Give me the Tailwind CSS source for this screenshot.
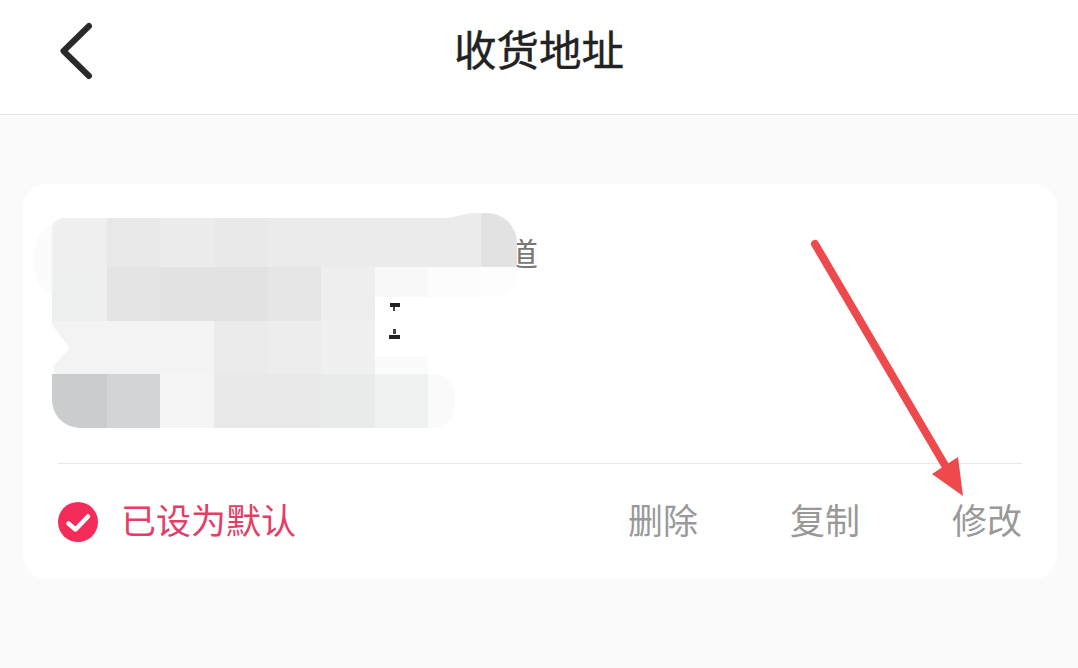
<!DOCTYPE html>
<html lang="zh-CN">

<head>
    <meta charset="UTF-8">
    <meta name="viewport" content="width=device-width, initial-scale=1.0">
    <title>收货地址</title>
    <script src="https://cdn.jsdelivr.net/npm/@tailwindcss/browser@4"></script>
</head>

<body class="bg-[#fafafa] font-['Noto_Sans_CJK_SC','Noto_Sans',sans-serif]">
    <div class="relative w-[1078px] h-[668px] overflow-hidden">
        <!-- header -->
        <div class="grid grid-cols-[1fr_auto_1fr] items-center h-[115px] pb-[18px] bg-white border-b border-[#e6e6e6]">
            <svg class="ml-[55px] mt-[6px]" width="44" height="64" viewBox="0 0 44 64" fill="none">
                <path d="M34 7 L8.500 32 L34 57" stroke="#2a2a2a" stroke-width="6" stroke-linecap="round" stroke-linejoin="round" />
            </svg>
            <p class="text-[42.500px] leading-[56px] text-[#222222] [-webkit-text-stroke:0.4px_#222222]">收货地址</p>
            <div></div>
        </div>

        <!-- address card -->
        <div class="relative ml-[23px] mr-[21px] mt-[69px] h-[395px] bg-white rounded-[24px]">
            <div class="h-[279px] pl-[483px] pt-[44px]">
                <p class="text-[32px] leading-[48px] text-[#777777]">道</p>
            </div>

            <!-- mosaic over the address -->
            <div class="absolute left-[10px] top-[34px] w-[60px] h-[84px] rounded-l-[40px] bg-[#fbfbfb]"></div>
            <div class="absolute left-[29px] top-[34px] grid grid-cols-[55px_53px_54px_54px_53px_54px_53px_53px_36px] grid-rows-[49px_54px_53px_54px]">
                <div class="rounded-tl-[12px] bg-[#efefef]"></div>
                <div class="bg-[#e8e8e8]"></div>
                <div class="bg-[#ececec]"></div>
                <div class="bg-[#e9e9e9]"></div>
                <div class="bg-[#ebebeb]"></div>
                <div class="bg-[#ebebeb]"></div>
                <div class="bg-[#ebebeb]"></div>
                <div class="-mt-[5px] bg-[#ebebeb] [clip-path:polygon(0_5px,40%_5px,80%_0,100%_0,100%_100%,0_100%)]"></div>
                <div class="-mt-[5px] rounded-tr-[30px] bg-[#e2e2e2]"></div>

                <div class="bg-[#eef0f0]"></div>
                <div class="bg-[#e4e4e4]"></div>
                <div class="bg-[#e2e2e2]"></div>
                <div class="bg-[#e2e2e2]"></div>
                <div class="bg-[#e6e6e6]"></div>
                <div class="bg-[#eeeeee]"></div>
                <div class="h-[30px] bg-[#f8f8f8]"></div>
                <div class="h-[30px] bg-[#fcfcfc]"></div>
                <div class="h-[30px] rounded-br-[24px] bg-[#fdfdfd]"></div>

                <div class="bg-[#f3f3f3] [clip-path:polygon(0_0,100%_0,100%_100%,4px_100%,0_46px,18px_27px,0_4px)]"></div>
                <div class="bg-[#f3f3f3]"></div>
                <div class="bg-[#f3f3f3]"></div>
                <div class="bg-[#ebebeb]"></div>
                <div class="bg-[#ededed]"></div>
                <div class="bg-[#f0f0f0]"></div>
                <div class="self-end h-[18px] bg-[#fbfbfb]"></div>
                <div></div>
                <div></div>

                <div class="rounded-bl-[28px] bg-[#cbcccd]"></div>
                <div class="bg-[#d3d4d5]"></div>
                <div class="bg-[#f5f5f5]"></div>
                <div class="bg-[#e9e9e9]"></div>
                <div class="bg-[#e9e9e9]"></div>
                <div class="bg-[#e9eaea]"></div>
                <div class="bg-[#f0f1f1]"></div>
                <div class="w-[27px] rounded-r-[22px] bg-[#fafafa]"></div>
                <div></div>
            </div>
            <!-- bits of text left showing through -->
            <div class="absolute left-[367px] top-[119px] w-[10px] h-[4px] bg-[#222222]"></div>
            <div class="absolute left-[370px] top-[123px] w-[2px] h-[4px] bg-[#444444]"></div>
            <div class="absolute left-[370px] top-[145px] w-[3px] h-[5px] bg-[#444444]"></div>
            <div class="absolute left-[366px] top-[151px] w-[11px] h-[4px] bg-[#222222]"></div>

            <!-- footer row -->
            <div class="ml-[35px] mr-[35px] border-t border-[#e8e8e8] h-[116px] pb-[5px] flex items-center justify-between text-[35px] leading-[48px]">
                <div class="flex items-center gap-[24px]">
                    <svg class="mt-[5px]" width="40" height="40" viewBox="0 0 40 40">
                        <circle cx="20" cy="20" r="20" fill="#f52b59" />
                        <path d="M10.500 21.500 L17.500 27.500 L30 14.500" fill="none" stroke="#ffffff" stroke-width="4.500" stroke-linecap="round" stroke-linejoin="round" />
                    </svg>
                    <span class="-ml-[1px] text-[#e63d67]">已设为默认</span>
                </div>
                <div class="flex gap-[92px] text-[#999999]">
                    <span>删除</span>
                    <span>复制</span>
                    <span>修改</span>
                </div>
            </div>
        </div>

        <!-- red arrow annotation -->
        <svg class="absolute left-0 top-0 pointer-events-none" width="1078" height="668" viewBox="0 0 1078 668" fill="none">
            <path d="M815 244 L946 467" stroke="#ee4a4e" stroke-width="8" stroke-linecap="round" />
            <path d="M958 457 L963 496 L932 474 Z" fill="#ee4a4e" />
        </svg>
    </div>
</body>

</html>
